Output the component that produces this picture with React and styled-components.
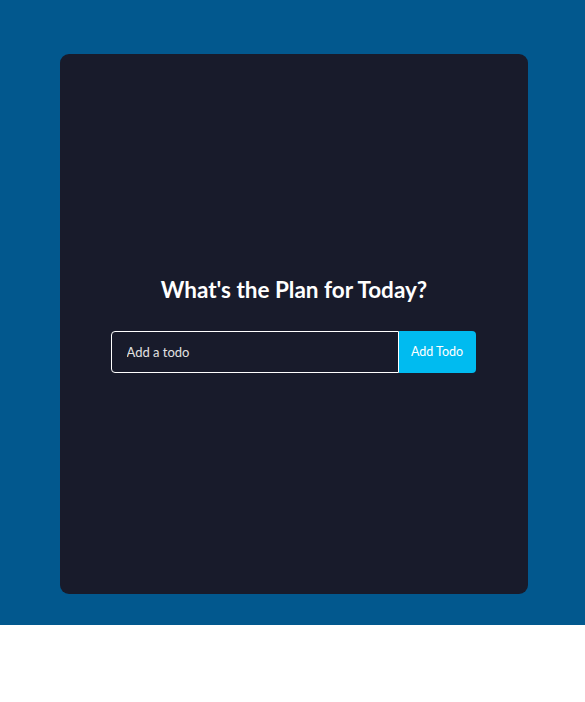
import React, { useState } from 'react';
import styled, { createGlobalStyle } from 'styled-components';

const GlobalStyle = createGlobalStyle`
  body {
    margin: 0;
    font-family: "Lato", "Liberation Sans", sans-serif;
    background: #ffffff;
  }
`;

const Page = styled.div`
  background: #02588e;
  padding: 54px 57px 31px 60px;
`;

const Card = styled.div`
  height: 540px;
  background: #181b2b;
  border-radius: 9px;
  display: flex;
  flex-direction: column;
  align-items: center;
  justify-content: center;
`;

const Title = styled.h1`
  margin: 0 0 28px;
  color: #ffffff;
  font-size: 22.5px;
  font-weight: 700;
`;

const Form = styled.form`
  display: flex;
  margin-right: 2px;
`;

const Input = styled.input`
  width: 288px;
  height: 42px;
  box-sizing: border-box;
  padding: 0 15px;
  background: transparent;
  border: 1px solid #ffffff;
  border-radius: 4px 0 0 4px;
  color: #ffffff;
  font-family: inherit;
  font-size: 13px;
  outline: none;

  &::placeholder {
    color: #e2e2e2;
  }
`;

const Button = styled.button`
  width: 77px;
  height: 42px;
  border: none;
  border-radius: 0 4px 4px 0;
  background: #00bbf0;
  color: #ffffff;
  font-family: inherit;
  font-size: 12.5px;
  cursor: pointer;
`;

export default function App() {
  const [text, setText] = useState('');

  return (
    <>
      <GlobalStyle />
      <Page>
        <Card>
          <Title>What's the Plan for Today?</Title>
          <Form onSubmit={(e) => e.preventDefault()}>
            <Input
              placeholder="Add a todo"
              value={text}
              onChange={(e) => setText(e.target.value)}
            />
            <Button type="submit">Add Todo</Button>
          </Form>
        </Card>
      </Page>
    </>
  );
}
